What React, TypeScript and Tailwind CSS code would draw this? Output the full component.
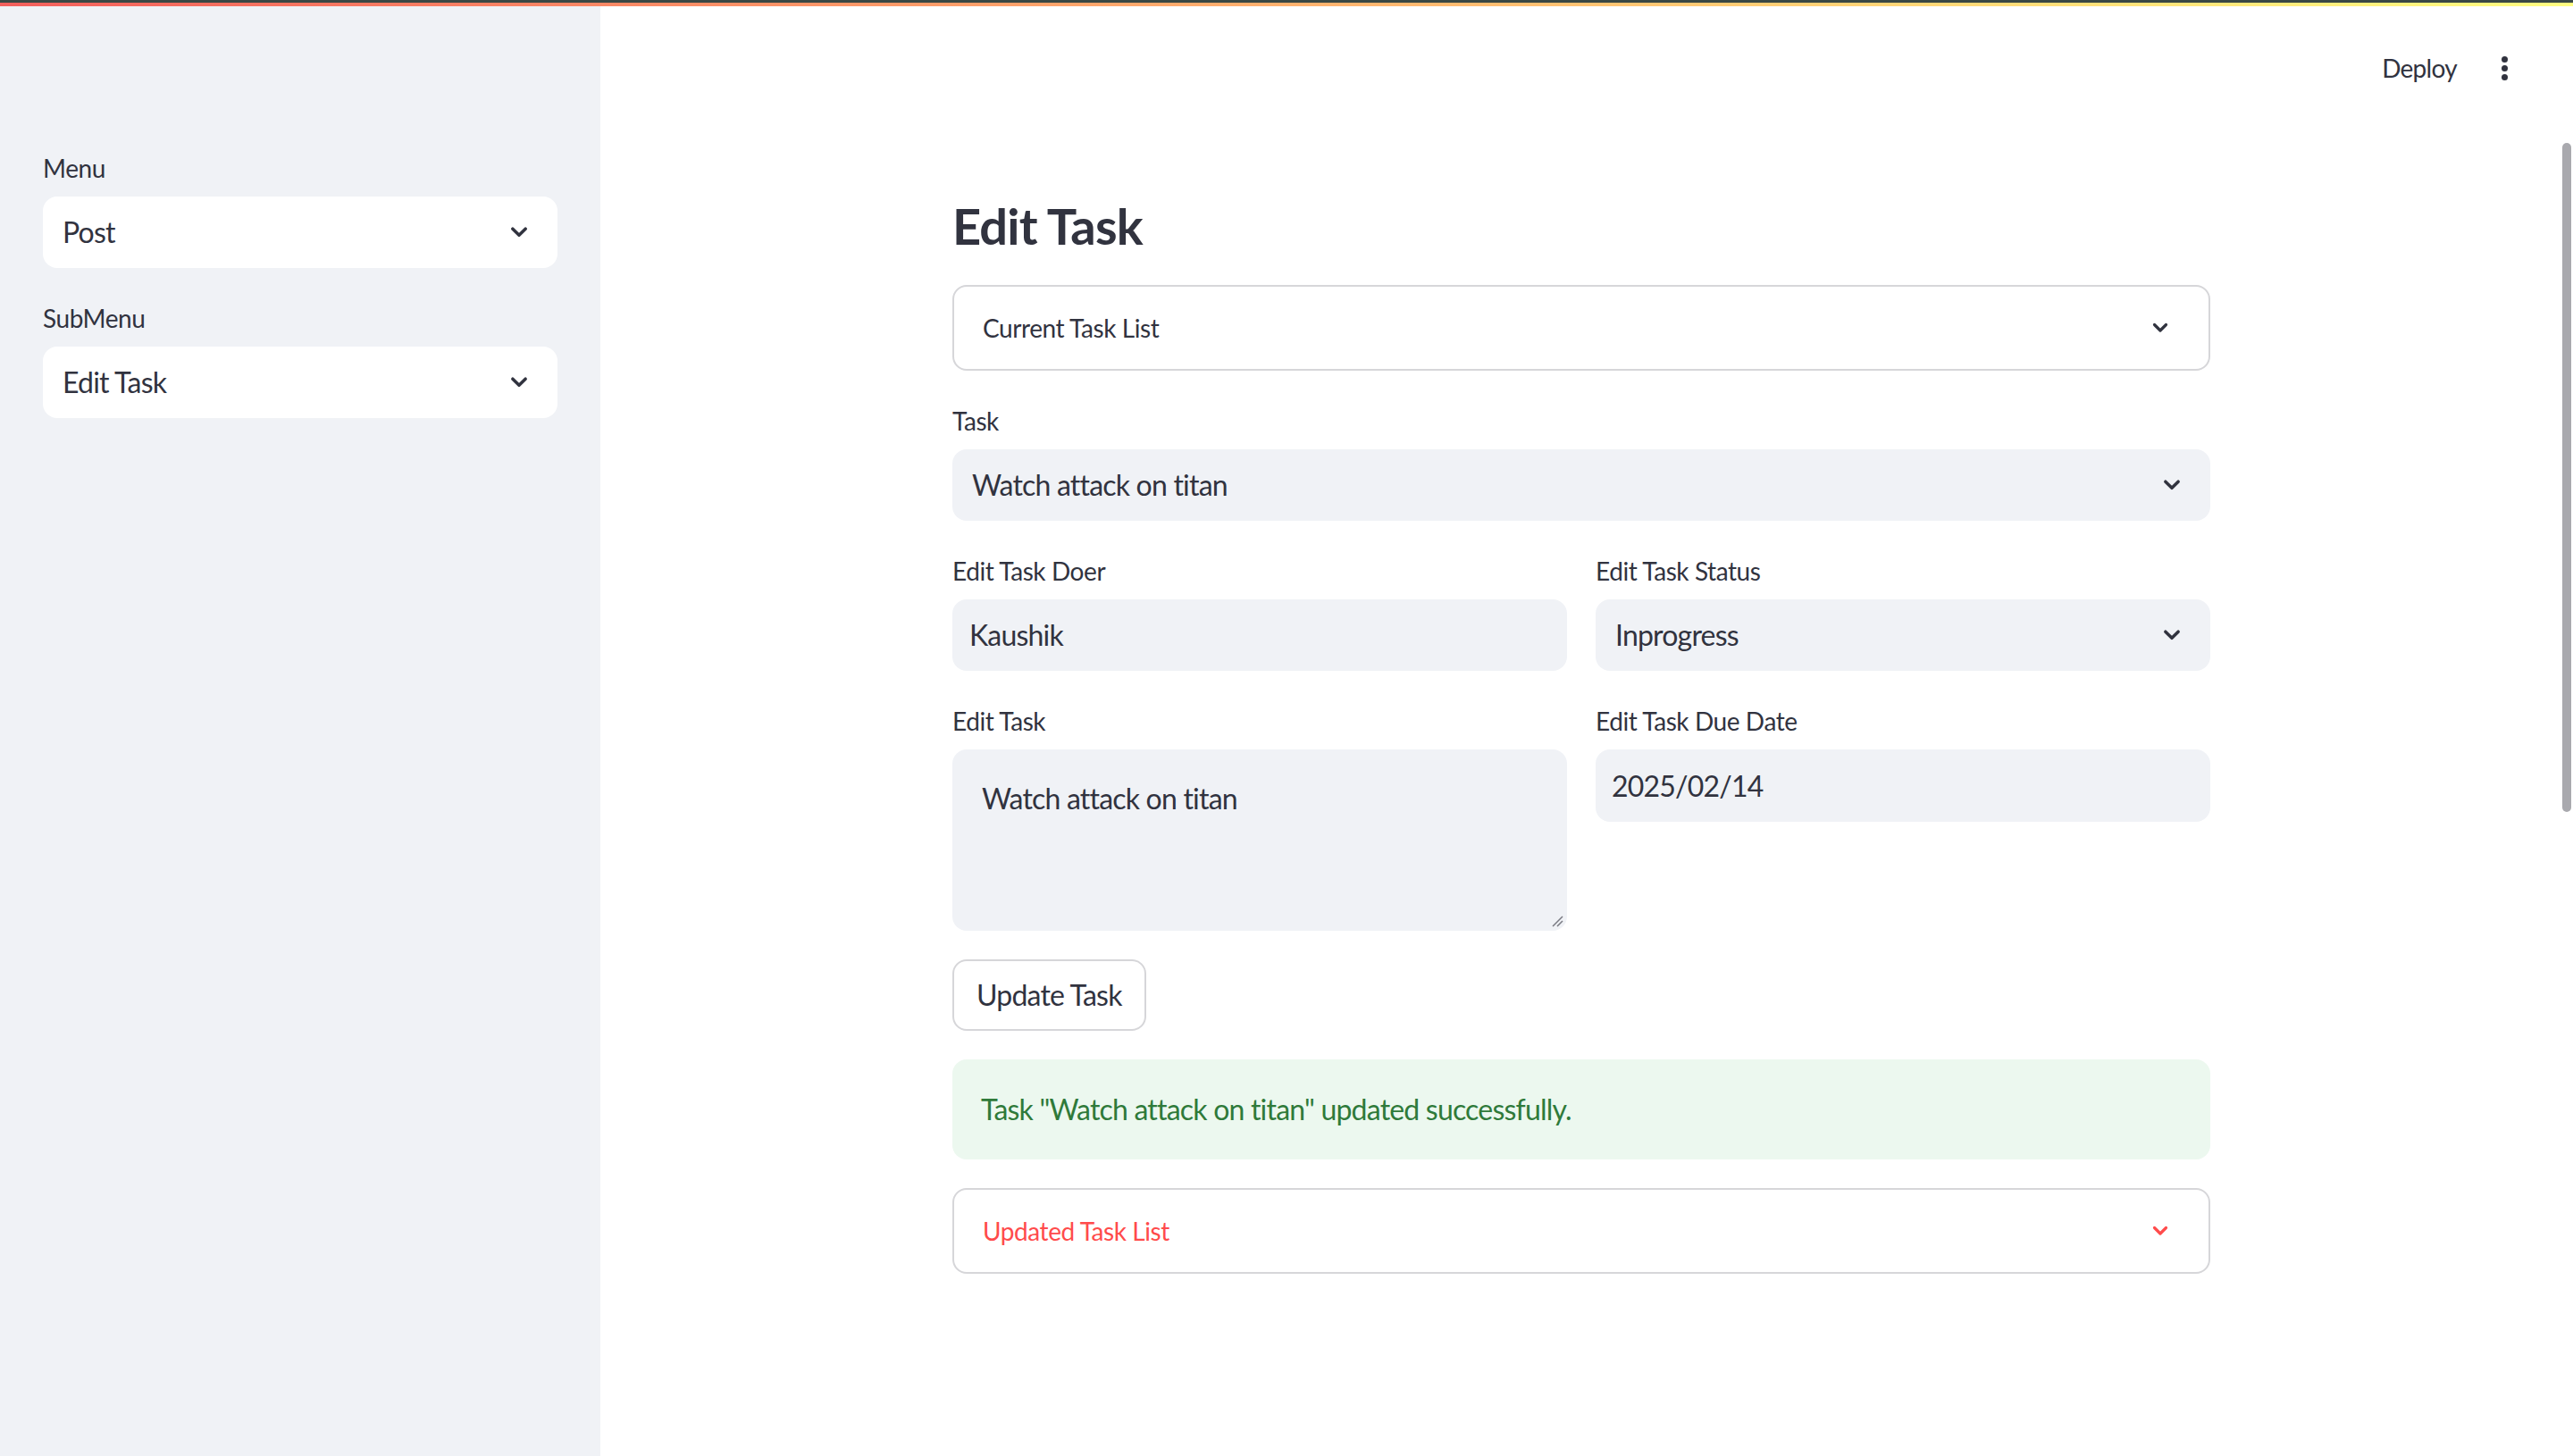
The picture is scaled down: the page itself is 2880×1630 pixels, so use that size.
import React from "react";

const Chevron = ({ className = "", size = 20, stroke = 3 }: { className?: string; size?: number; stroke?: number }) => (
  <svg width={size} height={size} viewBox="0 0 20 20" className={className} fill="none">
    <path d="M3.5 6.5 L10 13 L16.5 6.5" stroke="currentColor" strokeWidth={stroke} strokeLinecap="round" strokeLinejoin="round" />
  </svg>
);

const Label = ({ children }: { children: React.ReactNode }) => (
  <div className="h-[48px] mb-[8px] flex items-center text-[28px] text-[#31333f] leading-none tracking-[-0.015em]">{children}</div>
);

const SelectBox = ({ value, white = false }: { value: string; white?: boolean }) => (
  <div
    className={`h-[80px] rounded-[16px] flex items-center justify-between pl-[22px] pr-[32px] text-[32px] text-[#31333f] tracking-[-0.025em] ${
      white ? "bg-white" : "bg-[#f0f2f6]"
    }`}
  >
    <span>{value}</span>
    <Chevron className="text-[#31333f]" size={22} stroke={3.2} />
  </div>
);

const Expander = ({ title, active = false }: { title: string; active?: boolean }) => (
  <div className="h-[96px] rounded-[16px] border-2 border-[#d6d6d9] flex items-center justify-between pl-[32px] pr-[44px]">
    <span className={`text-[28px] tracking-[-0.015em] ${active ? "text-[#ff4b4b]" : "text-[#31333f]"}`}>{title}</span>
    <Chevron className={active ? "text-[#ff4b4b]" : "text-[#31333f]"} size={20} stroke={3.2} />
  </div>
);

export default function App() {
  return (
    <div className="w-[2880px] h-[1630px] flex flex-col overflow-hidden bg-white font-[Lato,sans-serif]">
      <div className="h-[3px] bg-[#3a4844]" />
      <div className="h-[4px] bg-gradient-to-r from-[#f25f5c] to-[#fffd80]" />
      <div className="flex flex-1 min-h-0">
        {/* Sidebar */}
        <aside className="w-[672px] shrink-0 bg-[#f0f2f6] px-[48px] pt-[157px] flex flex-col">
          <Label>Menu</Label>
          <SelectBox value="Post" white />
          <div className="h-[32px]" />
          <Label>SubMenu</Label>
          <SelectBox value="Edit Task" white />
        </aside>

        {/* Main */}
        <main className="flex-1 relative">
          <div className="absolute top-[48px] right-[61px] flex items-center gap-[50px]">
            <span className="text-[28px] text-[#31333f] tracking-[-0.025em]">Deploy</span>
            <div className="flex flex-col items-center gap-[3px]">
              <span className="w-[7px] h-[7px] rounded-full bg-[#31333f]" />
              <span className="w-[7px] h-[7px] rounded-full bg-[#31333f]" />
              <span className="w-[7px] h-[7px] rounded-full bg-[#31333f]" />
            </div>
          </div>

          <div className="w-[1408px] mx-auto pt-[212px] flex flex-col">
            <h1 className="h-[68px] leading-[68px] text-[56px] font-bold text-[#31333f] tracking-[-0.015em] mb-[32px]">Edit Task</h1>

            <Expander title="Current Task List" />

            <div className="mt-[32px]">
              <Label>Task</Label>
              <SelectBox value="Watch attack on titan" />
            </div>

            <div className="mt-[32px] grid grid-cols-2 gap-x-[32px] gap-y-[32px]">
              <div>
                <Label>Edit Task Doer</Label>
                <div className="h-[80px] rounded-[16px] bg-[#f0f2f6] flex items-center pl-[19px] text-[32px] text-[#31333f] tracking-[-0.025em]">
                  Kaushik
                </div>
              </div>
              <div>
                <Label>Edit Task Status</Label>
                <SelectBox value="Inprogress" />
              </div>
              <div>
                <Label>Edit Task</Label>
                <div className="relative h-[203px] rounded-[16px] bg-[#f0f2f6] px-[33px] pt-[32px] text-[32px] leading-[46px] text-[#31333f] tracking-[-0.025em]">
                  Watch attack on titan
                  <svg width="14" height="14" viewBox="0 0 14 14" className="absolute right-[4px] bottom-[4px]">
                    <path d="M13 2 L2 13 M13 7 L7 13" stroke="#7a7b83" strokeWidth="1.5" />
                  </svg>
                </div>
              </div>
              <div>
                <Label>Edit Task Due Date</Label>
                <div className="h-[81px] rounded-[16px] bg-[#f0f2f6] flex items-center pl-[18px] text-[32px] text-[#31333f] tracking-[-0.025em]">
                  2025/02/14
                </div>
              </div>
            </div>

            <div className="mt-[32px]">
              <div className="inline-flex h-[80px] items-center rounded-[16px] border-2 border-[#d6d6d9] bg-white px-[25px] text-[32px] text-[#31333f] tracking-[-0.025em]">
                Update Task
              </div>
            </div>

            <div className="mt-[32px] h-[112px] rounded-[16px] bg-[#ecf8ef] flex items-center pl-[32px] text-[32px] text-[#2f7a3a] tracking-[-0.025em]">
              Task "Watch attack on titan" updated successfully.
            </div>

            <div className="mt-[32px]">
              <Expander title="Updated Task List" active />
            </div>
          </div>
        </main>

        {/* Scrollbar */}
        <div className="w-[12px] shrink-0 pt-[153px]">
          <div className="w-[10px] h-[749px] rounded-full bg-[#a9a9ae]" />
        </div>
      </div>
    </div>
  );
}
